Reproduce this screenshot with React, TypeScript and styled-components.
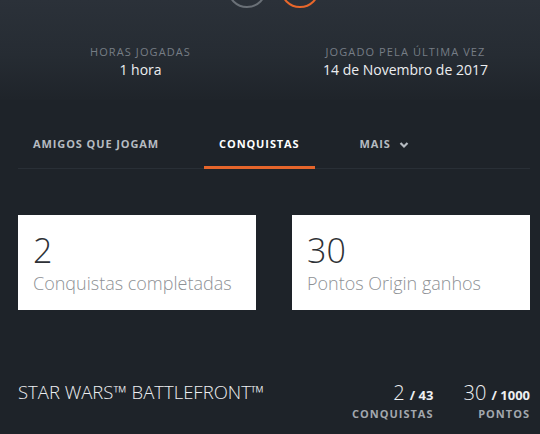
import React from 'react';
import styled, { createGlobalStyle } from 'styled-components';

const GlobalStyle = createGlobalStyle`
  html, body {
    margin: 0;
    padding: 0;
    background: #1e2329;
    font-family: "Open Sans", "Liberation Sans", sans-serif;
    overflow: hidden;
  }
`;

const tabs = [
  { id: 'friends', label: 'Amigos que jogam' },
  { id: 'achievements', label: 'Conquistas', active: true },
  { id: 'more', label: 'Mais', dropdown: true },
];

const App: React.FC = () => {
  return (
    <Page>
      <GlobalStyle />
      <Hero>
        <ActionRow>
          <RoundButton />
          <RoundButton accent />
        </ActionRow>
        <StatsGrid>
          <Stat>
            <StatLabel>Horas jogadas</StatLabel>
            <StatValue>1 hora</StatValue>
          </Stat>
          <Stat>
            <StatLabel>Jogado pela última vez</StatLabel>
            <StatValue>14 de Novembro de 2017</StatValue>
          </Stat>
        </StatsGrid>
      </Hero>

      <Content>
        <TabBar>
          {tabs.map(tab => (
            <Tab key={tab.id} active={tab.active}>
              {tab.label}
              {tab.dropdown && (
                <svg width="10" height="8" viewBox="0 0 10 8">
                  <polyline
                    points="1.5,2 5,5.5 8.5,2"
                    fill="none"
                    stroke="currentColor"
                    strokeWidth="2.2"
                  />
                </svg>
              )}
            </Tab>
          ))}
        </TabBar>

        <CardsGrid>
          <SummaryCard>
            <CardNumber>2</CardNumber>
            <CardLabel>Conquistas completadas</CardLabel>
          </SummaryCard>
          <SummaryCard>
            <CardNumber>30</CardNumber>
            <CardLabel>Pontos Origin ganhos</CardLabel>
          </SummaryCard>
        </CardsGrid>

        <GameRow>
          <GameTitle>STAR WARS™ BATTLEFRONT™</GameTitle>
          <GameStats>
            <GameStat>
              <Count>
                2 <Total>/ 43</Total>
              </Count>
              <CountLabel>Conquistas</CountLabel>
            </GameStat>
            <GameStat>
              <Count>
                30 <Total>/ 1000</Total>
              </Count>
              <CountLabel>Pontos</CountLabel>
            </GameStat>
          </GameStats>
        </GameRow>
      </Content>
    </Page>
  );
};

const Page = styled.div`
  width: 540px;
  height: 434px;
  background: #1e2329;
  overflow: hidden;
`;

const Hero = styled.section`
  display: flow-root;
  height: 100px;
  background: linear-gradient(180deg, #2b3139 0%, #262c33 55%, #1f242a 100%);
`;

const ActionRow = styled.div`
  display: flex;
  justify-content: center;
  gap: 13px;
  padding-left: 6px;
  margin-top: -32px;
`;

const RoundButton = styled.div<{ accent?: boolean }>`
  width: 36px;
  height: 36px;
  border-radius: 50%;
  border: 2px solid ${({ accent }) => (accent ? '#e8672b' : '#6a7077')};
`;

const StatsGrid = styled.div`
  display: grid;
  grid-template-columns: 1fr 1fr;
  padding: 0 2px 0 8px;
  margin-top: 36px;
`;

const Stat = styled.div`
  display: flex;
  flex-direction: column;
  align-items: center;
`;

const StatLabel = styled.div`
  font-size: 11px;
  line-height: 16px;
  letter-spacing: 1.1px;
  text-transform: uppercase;
  color: #767d85;
`;

const StatValue = styled.div`
  font-size: 14px;
  line-height: 20px;
  color: #eceef0;
`;

const Content = styled.main`
  padding: 0 10px 0 18px;
`;

const TabBar = styled.nav`
  display: flex;
  gap: 30px;
  margin-top: 36px;
  border-bottom: 1px solid #292f36;
`;

const Tab = styled.div<{ active?: boolean }>`
  display: flex;
  align-items: center;
  gap: 8px;
  padding: 0 15px 14px;
  margin-bottom: -1px;
  font-size: 11px;
  line-height: 16px;
  font-weight: 700;
  letter-spacing: 0.9px;
  text-transform: uppercase;
  color: ${({ active }) => (active ? '#ffffff' : '#b6bbc1')};
  border-bottom: 3px solid ${({ active }) => (active ? '#e5652b' : 'transparent')};

  svg {
    margin-top: 1px;
  }
`;

const CardsGrid = styled.div`
  display: grid;
  grid-template-columns: 1fr 1fr;
  gap: 36px;
  margin-top: 46px;
`;

const SummaryCard = styled.div`
  height: 95px;
  background: #ffffff;
  padding: 14px 15px 0;
  box-sizing: border-box;
`;

const CardNumber = styled.div`
  font-size: 34px;
  line-height: 42px;
  font-weight: 300;
  color: #2e3136;
`;

const CardLabel = styled.div`
  font-size: 18px;
  line-height: 24px;
  font-weight: 300;
  color: #8e9195;
`;

const GameRow = styled.div`
  display: flex;
  justify-content: space-between;
  align-items: flex-start;
  margin-top: 71px;
`;

const GameTitle = styled.div`
  font-size: 18.5px;
  line-height: 24px;
  font-weight: 300;
  color: #eef0f2;
  margin-top: -1px;
`;

const GameStats = styled.div`
  display: flex;
  gap: 30px;
`;

const GameStat = styled.div`
  display: flex;
  flex-direction: column;
  align-items: flex-end;
`;

const Count = styled.div`
  font-size: 20px;
  line-height: 24px;
  font-weight: 300;
  color: #eef0f2;
`;

const Total = styled.span`
  font-size: 13px;
  font-weight: 700;
`;

const CountLabel = styled.div`
  font-size: 11px;
  line-height: 14px;
  font-weight: 700;
  letter-spacing: 1px;
  text-transform: uppercase;
  color: #a3a8ae;
`;

export default App;
